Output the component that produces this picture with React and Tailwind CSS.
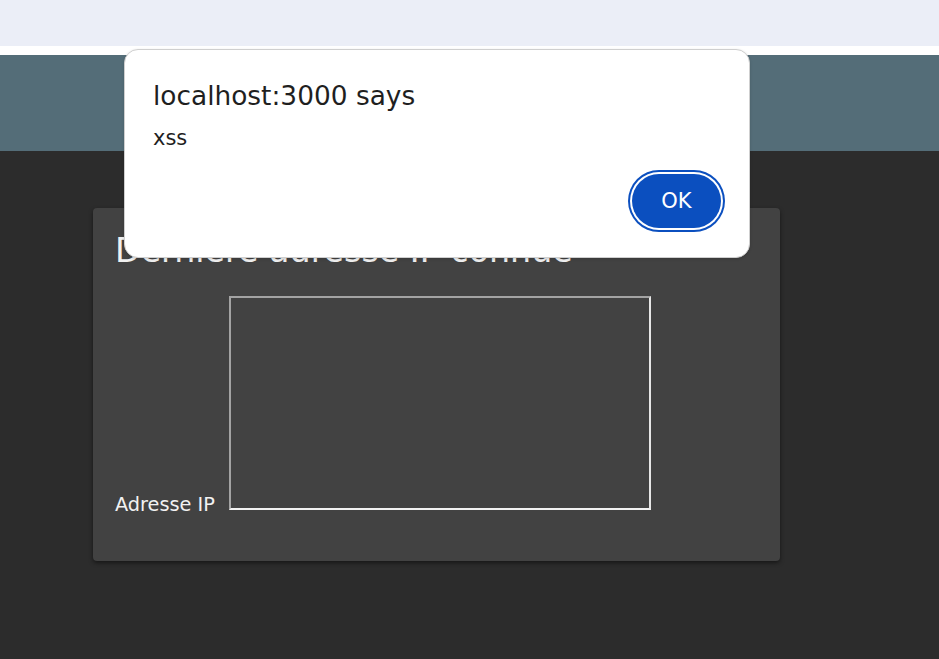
export default function App() {
  const font = { fontFamily: '"DejaVu Sans", Verdana, sans-serif' };
  return (
    <div className="relative flex min-h-screen flex-col" style={font}>
      <div className="h-[46px] bg-[#ebeef7]" />
      <div className="h-[9px] bg-white" />
      <header className="h-[96px] bg-[#546d78]" />
      <main className="flex-1 bg-[#2c2c2c] pl-[93px] pt-[57px] pb-[98px]">
        <div className="flex h-[353px] w-[687px] flex-col rounded bg-[#424242] px-[22px] pt-[26px] shadow-[0_2px_4px_rgba(0,0,0,0.5)]">
          <h1 className="text-[33.3px] leading-none text-[#f0f0f0]">Dernière adresse IP connue</h1>
          <div className="mt-[29px] flex items-end gap-[14px]">
            <label className="mb-[-4px] text-[19.3px] leading-none text-[#f2f2f2]">Adresse IP</label>
            <textarea
              className="h-[214px] w-[422px] resize-none border-2 border-t-[#a3a3a3] border-l-[#a3a3a3] border-b-[#f2f2f2] border-r-[#e6e6e6] bg-[#424242] outline-none"
              defaultValue=""
            />
          </div>
        </div>
      </main>

      <div className="absolute left-[124px] top-[49px] flex h-[209px] w-[626px] flex-col rounded-[14px] border border-[#cfcfcf] bg-white pl-[28px] pt-[33px] shadow-[0_1px_3px_rgba(0,0,0,0.15)]">
        <div className="text-[26.4px] leading-none text-[#1f1f1f]">localhost:3000 says</div>
        <div className="mt-[19px] text-[21px] leading-none text-[#1f1f1f]">xss</div>
        <div className="mt-[25px] flex justify-end pr-[28px]">
          <button className="flex h-[54px] w-[89px] items-center justify-center rounded-full bg-[#0b4fbf] text-[21px] leading-none text-white shadow-[0_0_0_2px_#ffffff,0_0_0_4px_#0b4fbf]">
            OK
          </button>
        </div>
      </div>
    </div>
  );
}
